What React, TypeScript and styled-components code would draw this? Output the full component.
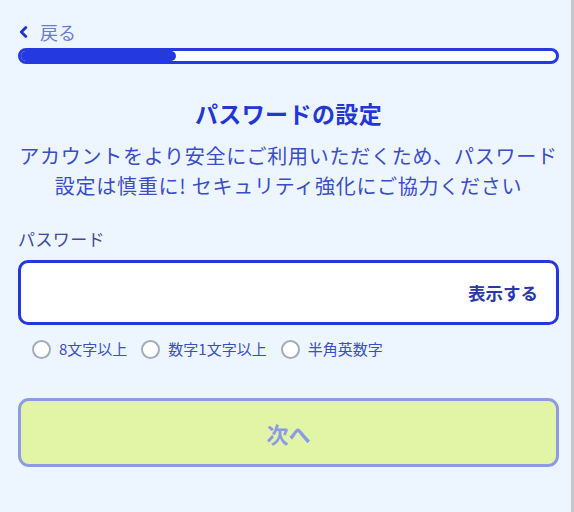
import React, { useState } from "react";
import styled, { createGlobalStyle } from "styled-components";

const GlobalStyle = createGlobalStyle`
  html, body {
    margin: 0;
    padding: 0;
    background: #edf5ff;
  }
  body {
    font-family: "Noto Sans CJK JP", "Noto Sans", sans-serif;
  }
  * {
    box-sizing: border-box;
  }
`;

const Page = styled.main`
  width: 574px;
  height: 512px;
  padding: 19px 12px 0 18px;
  background: #edf5ff;
  border-right: 3px solid #c3c6cc;
  display: flex;
  flex-direction: column;
`;

const BackLink = styled.button`
  display: flex;
  align-items: center;
  gap: 12px;
  padding: 0 0 0 1px;
  border: none;
  background: none;
  font-family: inherit;
  font-size: 18px;
  line-height: 26px;
  color: #6a7ad8;
  cursor: pointer;
  align-self: flex-start;
  svg {
    color: #1f35c9;
  }
`;

const Progress = styled.div`
  margin-top: 3px;
  height: 16px;
  border: 3px solid #2439e0;
  border-radius: 8px;
  background: #fff;
  overflow: hidden;
`;

const ProgressFill = styled.div`
  height: 100%;
  background: #2439e0;
  border-radius: 0 6px 6px 0;
`;

const Title = styled.h1`
  margin: 33px 0 0;
  text-align: center;
  font-size: 23px;
  line-height: 32px;
  font-weight: 700;
  letter-spacing: 0.4px;
  color: #2237d4;
`;

const Lead = styled.p`
  margin: 12px 0 0;
  text-align: center;
  font-size: 20px;
  line-height: 30px;
  letter-spacing: 0.75px;
  color: #3a4ec6;
`;

const Label = styled.label`
  margin-top: 26px;
  font-size: 17px;
  line-height: 24px;
  letter-spacing: 0.4px;
  color: #3f4c98;
`;

const InputBox = styled.div`
  margin-top: 9px;
  height: 65px;
  border: 3px solid #2338dc;
  border-radius: 10px;
  background: #fff;
  display: flex;
  align-items: center;
  padding: 0 18px 0 16px;
`;

const Input = styled.input`
  flex: 1;
  min-width: 0;
  border: none;
  outline: none;
  background: transparent;
  font-family: inherit;
  font-size: 18px;
  color: #1f2a70;
`;

const ToggleButton = styled.button`
  border: none;
  background: none;
  padding: 0;
  font-family: inherit;
  font-size: 17.5px;
  font-weight: 700;
  color: #2a39a6;
  cursor: pointer;
`;

const Rules = styled.ul`
  list-style: none;
  margin: 14px 0 0;
  padding: 0 0 0 14px;
  display: flex;
  gap: 14px;
`;

const Rule = styled.li`
  display: flex;
  align-items: center;
  gap: 8px;
  font-size: 15px;
  line-height: 20px;
  color: #3a4ec6;
`;

const Circle = styled.span<{ $done: boolean }>`
  width: 19px;
  height: 19px;
  border-radius: 50%;
  border: 2px solid ${(p) => (p.$done ? "#2439e0" : "#a2abb8")};
  background: ${(p) => (p.$done ? "#2439e0" : "#fff")};
`;

const NextButton = styled.button`
  margin-top: 39px;
  height: 69px;
  border: 3px solid #8d9be6;
  border-radius: 11px;
  background: #e2f5a6;
  font-family: inherit;
  font-size: 22px;
  font-weight: 700;
  color: #8d9be6;
  cursor: not-allowed;
`;

const ChevronLeft = () => (
  <svg width="9" height="12" viewBox="0 0 9 12" fill="none">
    <path
      d="M6.8 1.5 L2.3 6 L6.8 10.5"
      stroke="currentColor"
      strokeWidth="2.8"
      strokeLinecap="round"
      strokeLinejoin="round"
    />
  </svg>
);

export default function App() {
  const [password, setPassword] = useState("");
  const [visible, setVisible] = useState(false);

  const rules = [
    { label: "8文字以上", done: password.length >= 8 },
    { label: "数字1文字以上", done: /\d/.test(password) },
    { label: "半角英数字", done: password.length > 0 && /^[A-Za-z0-9]+$/.test(password) },
  ];
  const ok = rules.every((r) => r.done);

  return (
    <>
      <GlobalStyle />
      <Page>
        <BackLink type="button">
          <ChevronLeft />
          戻る
        </BackLink>
        <Progress>
          <ProgressFill style={{ width: "29%" }} />
        </Progress>
        <Title>パスワードの設定</Title>
        <Lead>
          アカウントをより安全にご利用いただくため、パスワード
          <br />
          設定は慎重に! セキュリティ強化にご協力ください
        </Lead>
        <Label htmlFor="pw">パスワード</Label>
        <InputBox>
          <Input
            id="pw"
            type={visible ? "text" : "password"}
            value={password}
            onChange={(e) => setPassword(e.target.value)}
          />
          <ToggleButton type="button" onClick={() => setVisible(!visible)}>
            {visible ? "非表示" : "表示する"}
          </ToggleButton>
        </InputBox>
        <Rules>
          {rules.map((r) => (
            <Rule key={r.label}>
              <Circle $done={r.done} />
              {r.label}
            </Rule>
          ))}
        </Rules>
        <NextButton type="button" disabled={!ok}>
          次へ
        </NextButton>
      </Page>
    </>
  );
}
